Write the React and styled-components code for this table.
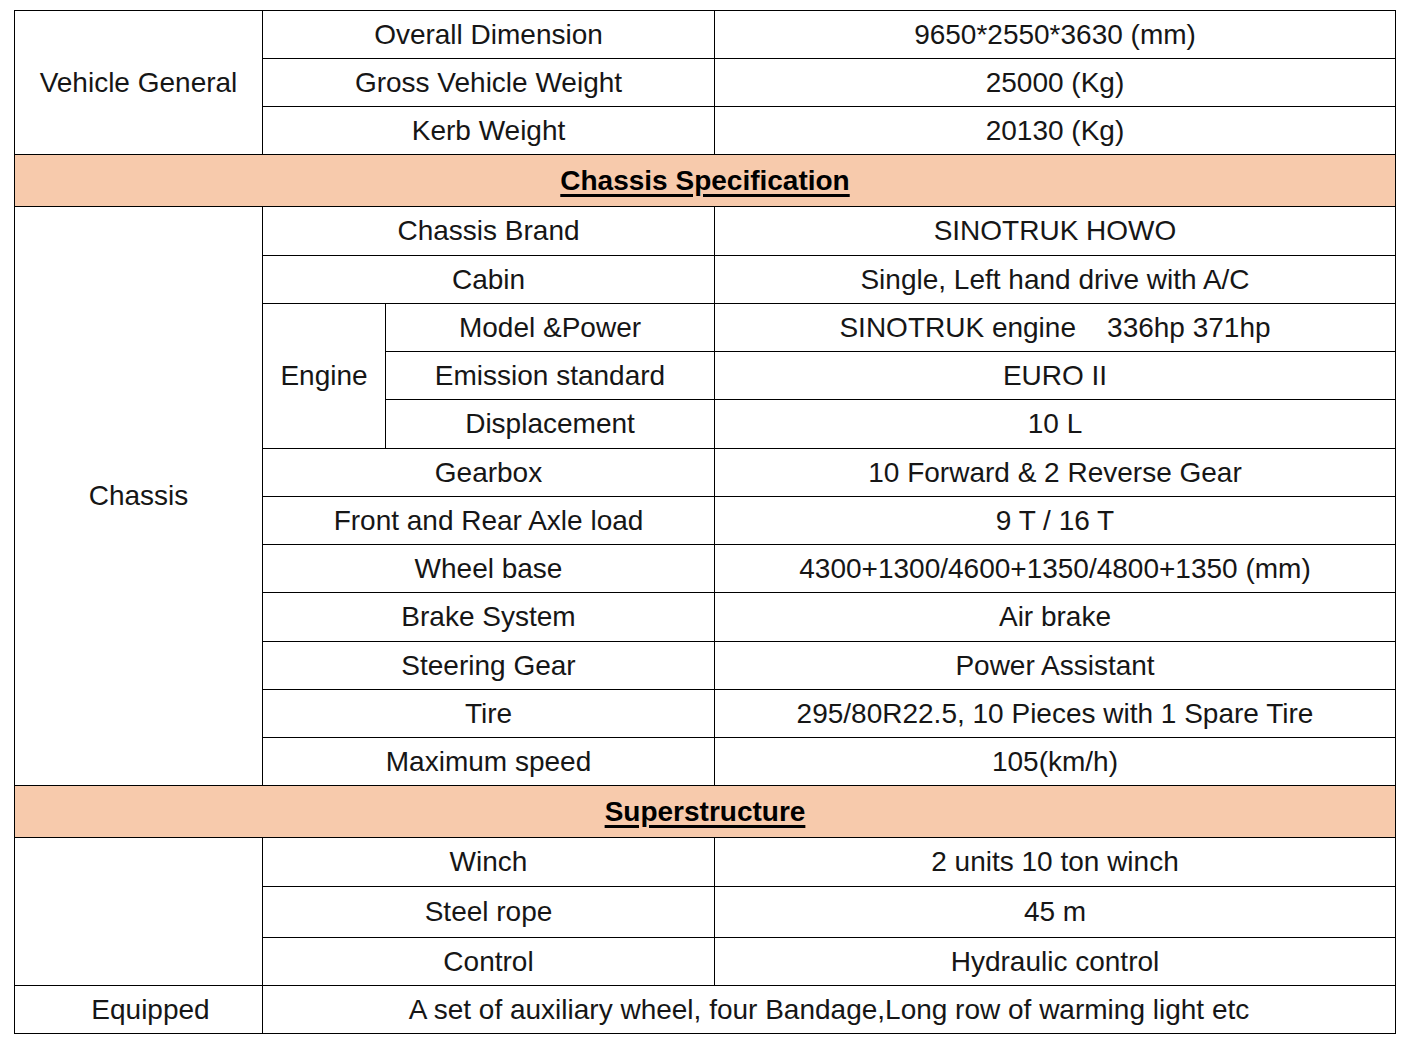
import React from "react";
import styled, { createGlobalStyle } from "styled-components";

const Global = createGlobalStyle`
  html, body { margin: 0; padding: 0; background: #fff; }
  body { font-family: "Liberation Sans", Arial, sans-serif; }
`;

const Page = styled.div`
  padding: 10px 0 0 14px;
`;

const Table = styled.table`
  border-collapse: collapse;
  table-layout: fixed;
  width: 1381px;
  font-family: "Liberation Sans", Arial, sans-serif;
  font-size: 28px;
  color: #161616;
`;

const Cell = styled.td`
  border: 1px solid #000;
  text-align: center;
  vertical-align: middle;
  padding: 0;
  padding-left: ${(p) => p.$indent || 0}px;
  white-space: pre;
  line-height: 1;
`;

const Header = styled.td`
  border: 1px solid #000;
  background: #f7caac;
  text-align: center;
  vertical-align: middle;
  padding: 0;
  font-weight: bold;
  color: #000;
`;

const HeaderText = styled.span`
  text-decoration: underline;
  text-decoration-thickness: 3px;
  text-underline-offset: 4px;
`;

const Row = styled.tr`
  height: ${(p) => p.$h}px;
`;

const chassisRows = [
  ["Gearbox", "10 Forward & 2 Reverse Gear", 48],
  ["Front and Rear Axle load", "9 T / 16 T", 48],
  ["Wheel base", "4300+1300/4600+1350/4800+1350 (mm)", 48],
  ["Brake System", "Air brake", 49],
  ["Steering Gear", "Power Assistant", 48],
  ["Tire", "295/80R22.5, 10 Pieces with 1 Spare Tire", 48],
  ["Maximum speed", "105(km/h)", 48],
];

export default function App() {
  return (
    <>
      <Global />
      <Page>
        <Table>
          <colgroup>
            <col style={{ width: 248 }} />
            <col style={{ width: 123 }} />
            <col style={{ width: 329 }} />
            <col style={{ width: 681 }} />
          </colgroup>
          <tbody>
            <Row $h={48}>
              <Cell rowSpan={3}>Vehicle General</Cell>
              <Cell colSpan={2}>Overall Dimension</Cell>
              <Cell>9650*2550*3630 (mm)</Cell>
            </Row>
            <Row $h={48}>
              <Cell colSpan={2}>Gross Vehicle Weight</Cell>
              <Cell>25000 (Kg)</Cell>
            </Row>
            <Row $h={48}>
              <Cell colSpan={2}>Kerb Weight</Cell>
              <Cell>20130 (Kg)</Cell>
            </Row>
            <Row $h={52}>
              <Header colSpan={4}>
                <HeaderText>Chassis Specification</HeaderText>
              </Header>
            </Row>
            <Row $h={49}>
              <Cell rowSpan={12}>Chassis</Cell>
              <Cell colSpan={2}>Chassis Brand</Cell>
              <Cell>SINOTRUK HOWO</Cell>
            </Row>
            <Row $h={48}>
              <Cell colSpan={2}>Cabin</Cell>
              <Cell>Single, Left hand drive with A/C</Cell>
            </Row>
            <Row $h={48}>
              <Cell rowSpan={3}>Engine</Cell>
              <Cell>Model &amp;Power</Cell>
              <Cell>{"SINOTRUK engine    336hp 371hp"}</Cell>
            </Row>
            <Row $h={48}>
              <Cell>Emission standard</Cell>
              <Cell>EURO II</Cell>
            </Row>
            <Row $h={49}>
              <Cell>Displacement</Cell>
              <Cell>10 L</Cell>
            </Row>
            {chassisRows.map(([k, v, h]) => (
              <Row key={k} $h={h}>
                <Cell colSpan={2}>{k}</Cell>
                <Cell>{v}</Cell>
              </Row>
            ))}
            <Row $h={52}>
              <Header colSpan={4}>
                <HeaderText>Superstructure</HeaderText>
              </Header>
            </Row>
            <Row $h={49}>
              <Cell rowSpan={3}></Cell>
              <Cell colSpan={2}>Winch</Cell>
              <Cell>2 units 10 ton winch</Cell>
            </Row>
            <Row $h={51}>
              <Cell colSpan={2}>Steel rope</Cell>
              <Cell>45 m</Cell>
            </Row>
            <Row $h={48}>
              <Cell colSpan={2}>Control</Cell>
              <Cell>Hydraulic control</Cell>
            </Row>
            <Row $h={48}>
              <Cell $indent={24}>Equipped</Cell>
              <Cell colSpan={3}>
                A set of auxiliary wheel, four Bandage,Long row of warming light etc
              </Cell>
            </Row>
          </tbody>
        </Table>
      </Page>
    </>
  );
}
